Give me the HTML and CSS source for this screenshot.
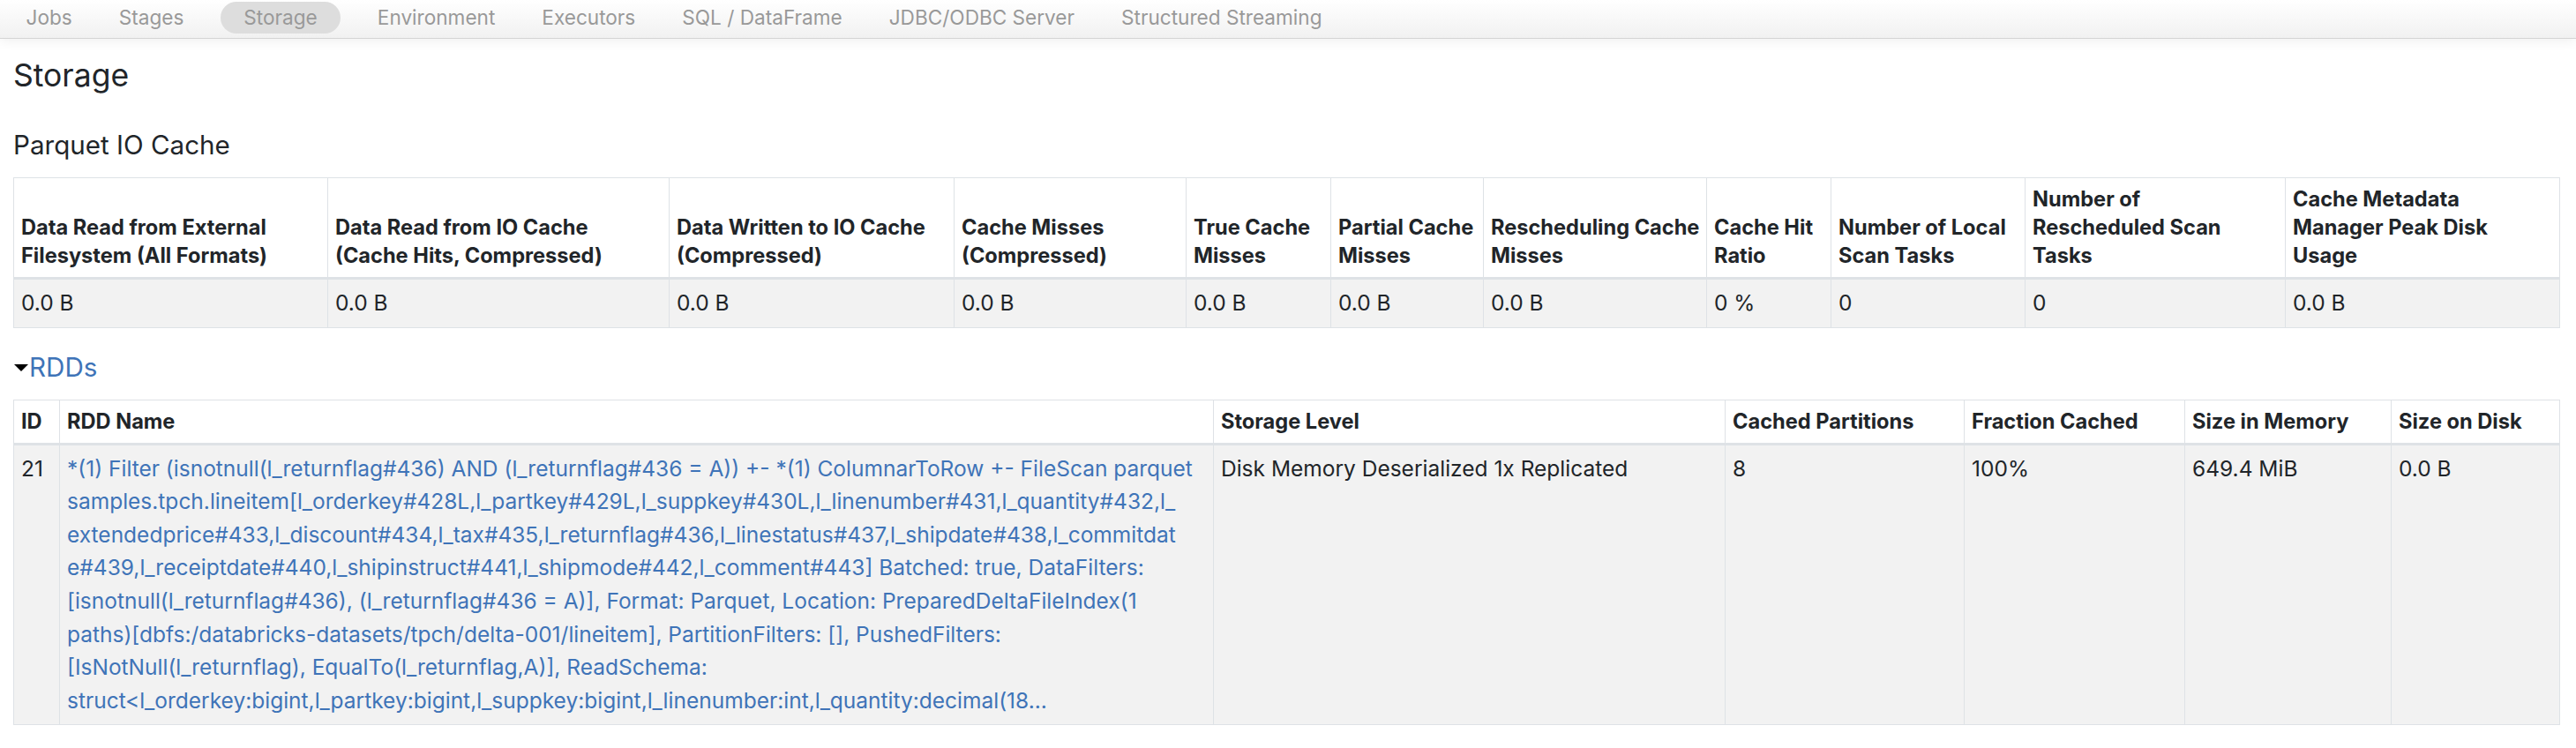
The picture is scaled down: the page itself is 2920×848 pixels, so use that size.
FILE: index.html
```html
<!DOCTYPE html>
<html>
<head>
<meta charset="utf-8">
<title>Storage</title>
<link rel="stylesheet" href="styles.css">
</head>
<body>
<nav class="topnav">
  <ul class="nav-items">
    <li><a href="#">Jobs</a></li>
    <li><a href="#">Stages</a></li>
    <li class="active"><a href="#">Storage</a></li>
    <li><a href="#">Environment</a></li>
    <li><a href="#">Executors</a></li>
    <li><a href="#">SQL / DataFrame</a></li>
    <li><a href="#">JDBC/ODBC Server</a></li>
    <li><a href="#">Structured Streaming</a></li>
  </ul>
</nav>
<main class="page">
  <h3 class="page-title">Storage</h3>
  <h4 class="section-title">Parquet IO Cache</h4>
  <table class="grid io-table">
    <colgroup>
      <col class="w356"><col class="w387"><col class="w323"><col class="w263"><col class="w164"><col class="w173"><col class="w253"><col class="w141"><col class="w220"><col class="w295"><col class="w311">
    </colgroup>
    <thead>
      <tr>
        <th>Data Read from External<br>Filesystem (All Formats)</th>
        <th>Data Read from IO Cache<br>(Cache Hits, Compressed)</th>
        <th>Data Written to IO Cache<br>(Compressed)</th>
        <th>Cache Misses<br>(Compressed)</th>
        <th>True Cache<br>Misses</th>
        <th>Partial Cache<br>Misses</th>
        <th>Rescheduling Cache<br>Misses</th>
        <th>Cache Hit<br>Ratio</th>
        <th>Number of Local<br>Scan Tasks</th>
        <th>Number of<br>Rescheduled Scan<br>Tasks</th>
        <th>Cache Metadata<br>Manager Peak Disk<br>Usage</th>
      </tr>
    </thead>
    <tbody>
      <tr>
        <td>0.0 B</td><td>0.0 B</td><td>0.0 B</td><td>0.0 B</td><td>0.0 B</td><td>0.0 B</td><td>0.0 B</td><td>0 %</td><td>0</td><td>0</td><td>0.0 B</td>
      </tr>
    </tbody>
  </table>

  <h4 class="collapse-title"><span class="arrow-open"></span><a href="#">RDDs</a></h4>
  <table class="grid rdd-table">
    <colgroup>
      <col class="w52"><col class="w1308"><col class="w580"><col class="w271"><col class="w250"><col class="w234"><col class="w191">
    </colgroup>
    <thead>
      <tr>
        <th>ID</th><th>RDD Name</th><th>Storage Level</th><th>Cached Partitions</th><th>Fraction Cached</th><th>Size in Memory</th><th>Size on Disk</th>
      </tr>
    </thead>
    <tbody>
      <tr>
        <td>21</td>
        <td><a href="#" class="rdd-name">*(1) Filter (isnotnull(l_returnflag#436) AND (l_returnflag#436 = A)) +- *(1) ColumnarToRow +- FileScan parquet<br>samples.tpch.lineitem[l_orderkey#428L,l_partkey#429L,l_suppkey#430L,l_linenumber#431,l_quantity#432,l_<br>extendedprice#433,l_discount#434,l_tax#435,l_returnflag#436,l_linestatus#437,l_shipdate#438,l_commitdat<br>e#439,l_receiptdate#440,l_shipinstruct#441,l_shipmode#442,l_comment#443] Batched: true, DataFilters:<br>[isnotnull(l_returnflag#436), (l_returnflag#436 = A)], Format: Parquet, Location: PreparedDeltaFileIndex(1<br>paths)[dbfs:/databricks-datasets/tpch/delta-001/lineitem], PartitionFilters: [], PushedFilters:<br>[IsNotNull(l_returnflag), EqualTo(l_returnflag,A)], ReadSchema:<br>struct&lt;l_orderkey:bigint,l_partkey:bigint,l_suppkey:bigint,l_linenumber:int,l_quantity:decimal(18...</a></td>
        <td>Disk Memory Deserialized 1x Replicated</td>
        <td>8</td>
        <td>100%</td>
        <td>649.4 MiB</td>
        <td>0.0 B</td>
      </tr>
    </tbody>
  </table>
</main>
</body>
</html>
```
FILE: styles.css
```css
html, body {
  margin: 0;
  padding: 0;
  background: #ffffff;
}

body {
  font-family: "Inter", "Noto Sans", sans-serif;
  color: #212529;
}

a {
  color: #3f74b8;
  text-decoration: none;
}

/* ---------- top navigation ---------- */
.topnav {
  box-sizing: border-box;
  height: 44px;
  padding-top: 2px;
  background: linear-gradient(#ffffff, #f1f1f1);
  border-bottom: 1px solid #d4d4d4;
  box-shadow: 0 2px 14px rgba(0, 0, 0, 0.07);
  position: relative;
}

.nav-items {
  list-style: none;
  margin: 0;
  padding: 0 0 0 3px;
  display: flex;
  align-items: flex-start;
}

.nav-items li a {
  display: block;
  height: 36px;
  line-height: 36px;
  padding: 0 26.5px;
  font-size: 22.6px;
  color: #999999;
  white-space: nowrap;
}

.nav-items li.active {
  margin: 0 15px;
}

.nav-items li.active a {
  background: #dddddd;
  border-radius: 18px;
}

/* ---------- page ---------- */
.page {
  padding: 0 19px 40px 15px;
}

.page-title {
  margin: 19px 0 0;
  font-size: 35.5px;
  line-height: 46px;
  font-weight: 400;
  color: #212529;
}

.section-title {
  margin: 39px 0 20px;
  font-size: 29.6px;
  line-height: 33px;
  font-weight: 400;
  color: #212529;
}

.collapse-title {
  margin: 28px 0 20px;
  font-size: 29.6px;
  line-height: 33px;
  font-weight: 400;
  display: flex;
  align-items: flex-end;
}

.arrow-open {
  display: inline-block;
  width: 0;
  height: 0;
  border-left: 8px solid transparent;
  border-right: 8px solid transparent;
  border-top: 8px solid #000000;
  margin: 0 1px 11px 1px;
  position: relative;
  top: -1px;
}

/* ---------- tables ---------- */
.grid {
  width: 2886px;
  table-layout: fixed;
  border-collapse: collapse;
  font-size: 24.5px;
}

.grid th,
.grid td {
  border: 1px solid #dee2e6;
  padding: 8px 8px;
  text-align: left;
}

.grid th {
  font-size: 23.6px;
  font-weight: 700;
  line-height: 32px;
  vertical-align: bottom;
  white-space: nowrap;
  border-bottom: 3px solid #dee2e6;
}

.grid td {
  line-height: 37.6px;
  vertical-align: top;
  background: #f2f2f2;
}

.rdd-name {
  white-space: nowrap;
}

.w52 { width: 52px; }
.w1308 { width: 1308px; }
.w580 { width: 580px; }
.w271 { width: 271px; }
.w250 { width: 250px; }
.w234 { width: 234px; }
.w191 { width: 191px; }

.w356 { width: 356px; }
.w387 { width: 387px; }
.w323 { width: 323px; }
.w263 { width: 263px; }
.w164 { width: 164px; }
.w173 { width: 173px; }
.w253 { width: 253px; }
.w141 { width: 141px; }
.w220 { width: 220px; }
.w295 { width: 295px; }
.w311 { width: 311px; }
```
